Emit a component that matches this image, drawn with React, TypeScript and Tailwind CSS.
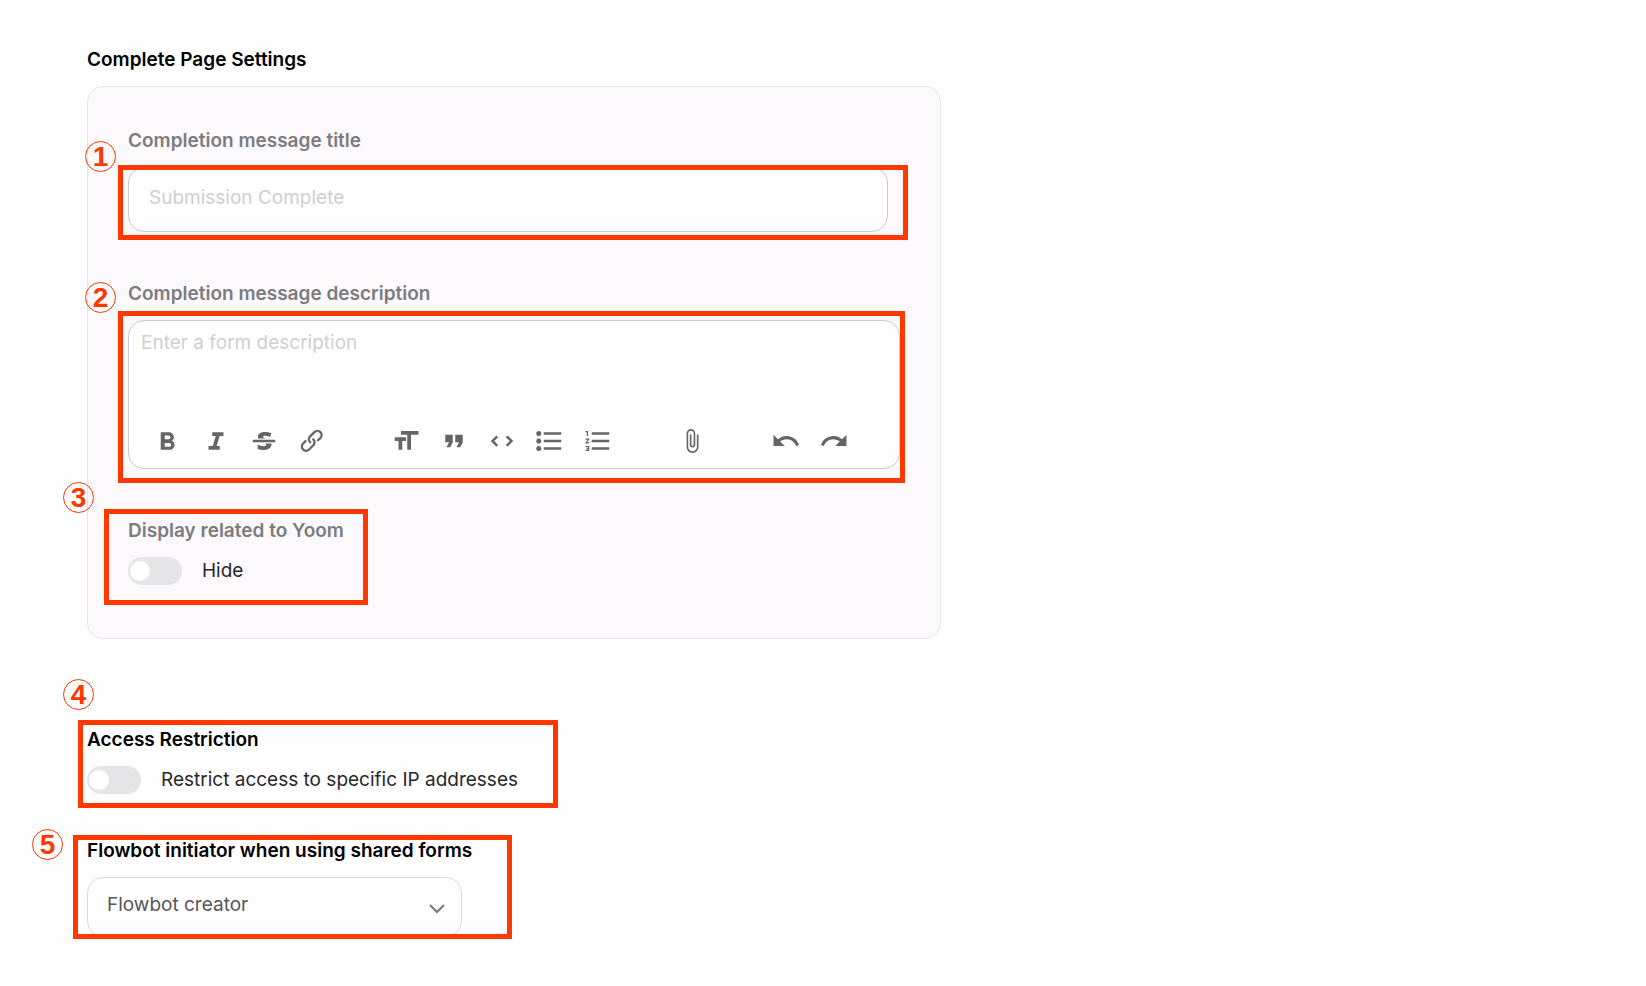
import { useState } from "react";
import type { ReactNode } from "react";
import { MdAttachFile, MdFormatListNumbered, MdFormatQuote, MdRedo, MdUndo } from "react-icons/md";

type Tool = { label: string; icon: ReactNode };

const TEXT_TOOLS: Tool[] = [
  { label: "Bold", icon: <BoldIcon /> },
  { label: "Italic", icon: <ItalicIcon /> },
  { label: "Strikethrough", icon: <StrikeIcon /> },
  { label: "Link", icon: <LinkIcon /> },
];

const BLOCK_TOOLS: Tool[] = [
  { label: "Heading", icon: <HeadingIcon /> },
  { label: "Quote", icon: <MdFormatQuote size={30} /> },
  { label: "Code", icon: <CodeIcon /> },
  { label: "Bullets", icon: <BulletsIcon /> },
  { label: "Numbers", icon: <MdFormatListNumbered size={30} /> },
];

const FILE_TOOLS: Tool[] = [
  { label: "Attach files", icon: <MdAttachFile size={26} /> },
];

const HISTORY_TOOLS: Tool[] = [
  { label: "Undo", icon: <MdUndo size={30} /> },
  { label: "Redo", icon: <MdRedo size={30} /> },
];

export default function App() {
  const [showRelated, setShowRelated] = useState(false);
  const [restricted, setRestricted] = useState(false);

  return (
    <main className="min-h-screen bg-[#fefefe] px-[87px] pt-[46px] pb-12 font-[Inter,'Liberation_Sans',sans-serif] text-[19px] leading-7 text-[#27272a]">
      <section>
        <h2 className="font-semibold text-black">Complete Page Settings</h2>
        <div className="mt-3 w-full max-w-[854px] rounded-2xl border border-[#e6e4e9] bg-[#fbf9fc] px-10 pt-10 pb-[53px]">
          <div>
            <FieldLabel htmlFor="message-title">Completion message title</FieldLabel>
            <div className="relative mt-3 pr-3">
              <input
                id="message-title"
                type="text"
                placeholder="Submission Complete"
                className="block h-[65px] w-full rounded-2xl border border-[#c9c8cc] bg-[#fefefe] px-5 pb-1 outline-none placeholder:text-[#cfced2]"
              />
              <Frame className="-top-0.5 -right-2 -bottom-2 -left-2.5" />
              <Marker n={1} className="-top-[26px] -left-[43px]" />
            </div>
          </div>

          <div className="mt-12">
            <FieldLabel htmlFor="message-description">Completion message description</FieldLabel>
            <div className="relative mt-3">
              <div className="rounded-2xl border border-[#c9c8cc] bg-[#fefefe] px-3 pt-2 pb-3">
                <textarea
                  id="message-description"
                  placeholder="Enter a form description"
                  className="block h-[97px] w-full resize-none outline-none placeholder:text-[#cfced2]"
                />
                <div className="flex items-center px-3 text-[#656468]">
                  <ToolGroup tools={TEXT_TOOLS} />
                  <ToolGroup tools={BLOCK_TOOLS} className="ml-16" />
                  <ToolGroup tools={FILE_TOOLS} className="ml-16" />
                  <ToolGroup tools={HISTORY_TOOLS} className="ml-16" />
                </div>
              </div>
              <Frame className="-top-[9px] -right-[5px] -bottom-3.5 -left-2.5" />
              <Marker n={2} className="-top-[38px] -left-[43px]" />
            </div>
          </div>

          <div className="relative mt-12 w-fit">
            <FieldLabel htmlFor="show-related">Display related to Yoom</FieldLabel>
            <div className="mt-3 flex items-center gap-5">
              <Toggle id="show-related" checked={showRelated} onChange={setShowRelated} />
              <label htmlFor="show-related">{showRelated ? "Show" : "Hide"}</label>
            </div>
            <Frame className="-top-2 -right-6 -bottom-5 -left-6" />
            <Marker n={3} className="-top-[35px] -left-[65px]" />
          </div>
        </div>
      </section>

      <section className="relative mt-[87px] w-fit">
        <h2 className="font-semibold text-black">Access Restriction</h2>
        <div className="mt-3 flex items-center gap-5">
          <Toggle id="restrict-access" checked={restricted} onChange={setRestricted} />
          <label htmlFor="restrict-access">Restrict access to specific IP addresses</label>
        </div>
        <Frame className="-top-1.5 -right-10 -bottom-3.5 -left-[9px]" />
        <Marker n={4} className="-top-[47px] -left-6" />
      </section>

      <section className="relative mt-[43px] w-fit">
        <label htmlFor="initiator" className="block font-semibold text-black">
          Flowbot initiator when using shared forms
        </label>
        <div className="relative mt-3 w-[375px]">
          <select
            id="initiator"
            className="block h-[60px] w-full appearance-none rounded-2xl border border-[#d9d7e0] bg-[#fefefe] px-[19px] pb-1 text-[#56555a] outline-none"
          >
            <option>Flowbot creator</option>
          </select>
          <svg
            viewBox="0 0 16 10"
            className="pointer-events-none absolute top-[27px] right-[17px] h-2.5 w-4 fill-none stroke-[#77767a] stroke-2"
          >
            <path d="M1 1l7 7 7-7" />
          </svg>
        </div>
        <Frame className="-top-0.5 -right-10 -bottom-0.5 -left-3.5" />
        <Marker n={5} className="-top-2 -left-[55px]" />
      </section>
    </main>
  );
}

function FieldLabel({ htmlFor, children }: { htmlFor: string; children: ReactNode }) {
  return (
    <label htmlFor={htmlFor} className="block font-semibold text-[#7c7b7f]">
      {children}
    </label>
  );
}

// Red outline drawn over the part of the form a marker points at
function Frame({ className }: { className: string }) {
  return (
    <div
      aria-hidden
      className={`pointer-events-none absolute border-5 border-[#ff3700] ${className}`}
    />
  );
}

function Marker({ n, className }: { n: number; className: string }) {
  return (
    <span
      className={`absolute flex size-[31px] items-center justify-center rounded-full border border-[#ff3700] font-['Liberation_Sans',sans-serif] text-[28px] leading-none font-bold text-[#ff3700] ${className}`}
    >
      {n}
    </span>
  );
}

function Toggle({
  id,
  checked,
  onChange,
}: {
  id: string;
  checked: boolean;
  onChange: (next: boolean) => void;
}) {
  return (
    <span className="relative flex h-7 w-[54px] items-center">
      <input
        id={id}
        type="checkbox"
        role="switch"
        checked={checked}
        onChange={(e) => onChange(e.target.checked)}
        className="peer h-7 w-full cursor-pointer appearance-none rounded-full bg-[#e5e4e7] checked:bg-[#6b5cf0]"
      />
      <span className="pointer-events-none absolute left-0.5 size-5 rounded-full bg-white peer-checked:left-8" />
    </span>
  );
}

function ToolGroup({ tools, className = "" }: { tools: Tool[]; className?: string }) {
  return (
    <div className={`flex gap-[18px] ${className}`}>
      {tools.map((tool) => (
        <button
          key={tool.label}
          type="button"
          aria-label={tool.label}
          className="flex size-[30px] items-center justify-center"
        >
          {tool.icon}
        </button>
      ))}
    </div>
  );
}

function EditorIcon({ children }: { children: ReactNode }) {
  return (
    <svg viewBox="0 0 24 24" width={30} height={30} fill="currentColor">
      {children}
    </svg>
  );
}

function BoldIcon() {
  return (
    <EditorIcon>
      <path d="M15.1 11.8c1-.7 1.6-1.8 1.6-2.8a4 4 0 0 0-4-4H6.2v14h7.3c2.1 0 3.7-1.7 3.7-3.8 0-1.5-.8-2.8-2.1-3.4zM9.4 7.5h3.1a1.5 1.5 0 1 1 0 3H9.4v-3zm3.6 9H9.4v-3H13a1.5 1.5 0 1 1 0 3z" />
    </EditorIcon>
  );
}

function ItalicIcon() {
  return (
    <EditorIcon>
      <path d="M9 5v3h2.8l-2.4 8H6v3h9v-3h-2.5l2.4-8H18V5H9z" />
    </EditorIcon>
  );
}

function StrikeIcon() {
  return (
    <EditorIcon>
      <path d="M12.73 14l.28.14c.26.15.45.3.57.44.12.14.18.3.18.5 0 .3-.15.56-.44.75-.3.2-.76.3-1.39.3A13.52 13.52 0 0 1 7 14.95v3.37a10.64 10.64 0 0 0 4.84.88c1.26 0 2.35-.19 3.28-.56.93-.37 1.64-.9 2.14-1.57s.74-1.45.74-2.32c0-.26-.02-.51-.06-.75h-5.21zm-5.5-4c-.08-.34-.12-.7-.12-1.1 0-1.29.52-2.3 1.58-3.02 1.05-.72 2.5-1.08 4.34-1.08 1.62 0 3.28.34 4.97 1l-1.3 2.93c-1.47-.6-2.73-.9-3.8-.9-.55 0-.96.08-1.2.26-.26.17-.38.38-.38.64 0 .27.16.52.48.74.17.12.53.3 1.05.53H7.23zM3 13h18v-2H3v2z" />
    </EditorIcon>
  );
}

function LinkIcon() {
  return (
    <EditorIcon>
      <path d="M9.88 13.7a4.3 4.3 0 0 1 0-6.07l3.37-3.37a4.26 4.26 0 0 1 6.07 0 4.3 4.3 0 0 1 0 6.06l-1.96 1.72a.91.91 0 1 1-1.3-1.3l1.97-1.71a2.46 2.46 0 0 0-3.48-3.48l-3.38 3.37a2.46 2.46 0 0 0 0 3.48.91.91 0 1 1-1.3 1.3z" />
      <path d="M4.25 19.46a4.3 4.3 0 0 1 0-6.07l1.93-1.9a.91.91 0 1 1 1.3 1.3l-1.93 1.9a2.46 2.46 0 0 0 3.48 3.48l3.37-3.38c.96-.96.96-2.52 0-3.48a.91.91 0 1 1 1.3-1.3 4.3 4.3 0 0 1 0 6.07l-3.38 3.38a4.26 4.26 0 0 1-6.07 0z" />
    </EditorIcon>
  );
}

function HeadingIcon() {
  return (
    <EditorIcon>
      <path d="M12 9v3H9v7H6v-7H3V9h9zM8 4h14v3h-6v12h-3V7H8V4z" />
    </EditorIcon>
  );
}

function CodeIcon() {
  return (
    <EditorIcon>
      <path d="M18.2 12l-3.1 3.1 1.4 1.4L21 12l-4.5-4.5-1.4 1.4 3.1 3.1zM5.8 12l3.1-3.1-1.4-1.4L3 12l4.5 4.5 1.4-1.4L5.8 12z" />
    </EditorIcon>
  );
}

function BulletsIcon() {
  return (
    <EditorIcon>
      <circle cx="3" cy="6" r="2" />
      <circle cx="3" cy="12" r="2" />
      <circle cx="3" cy="18" r="2" />
      <path d="M7 5h14v2H7zM7 11h14v2H7zM7 17h14v2H7z" />
    </EditorIcon>
  );
}
